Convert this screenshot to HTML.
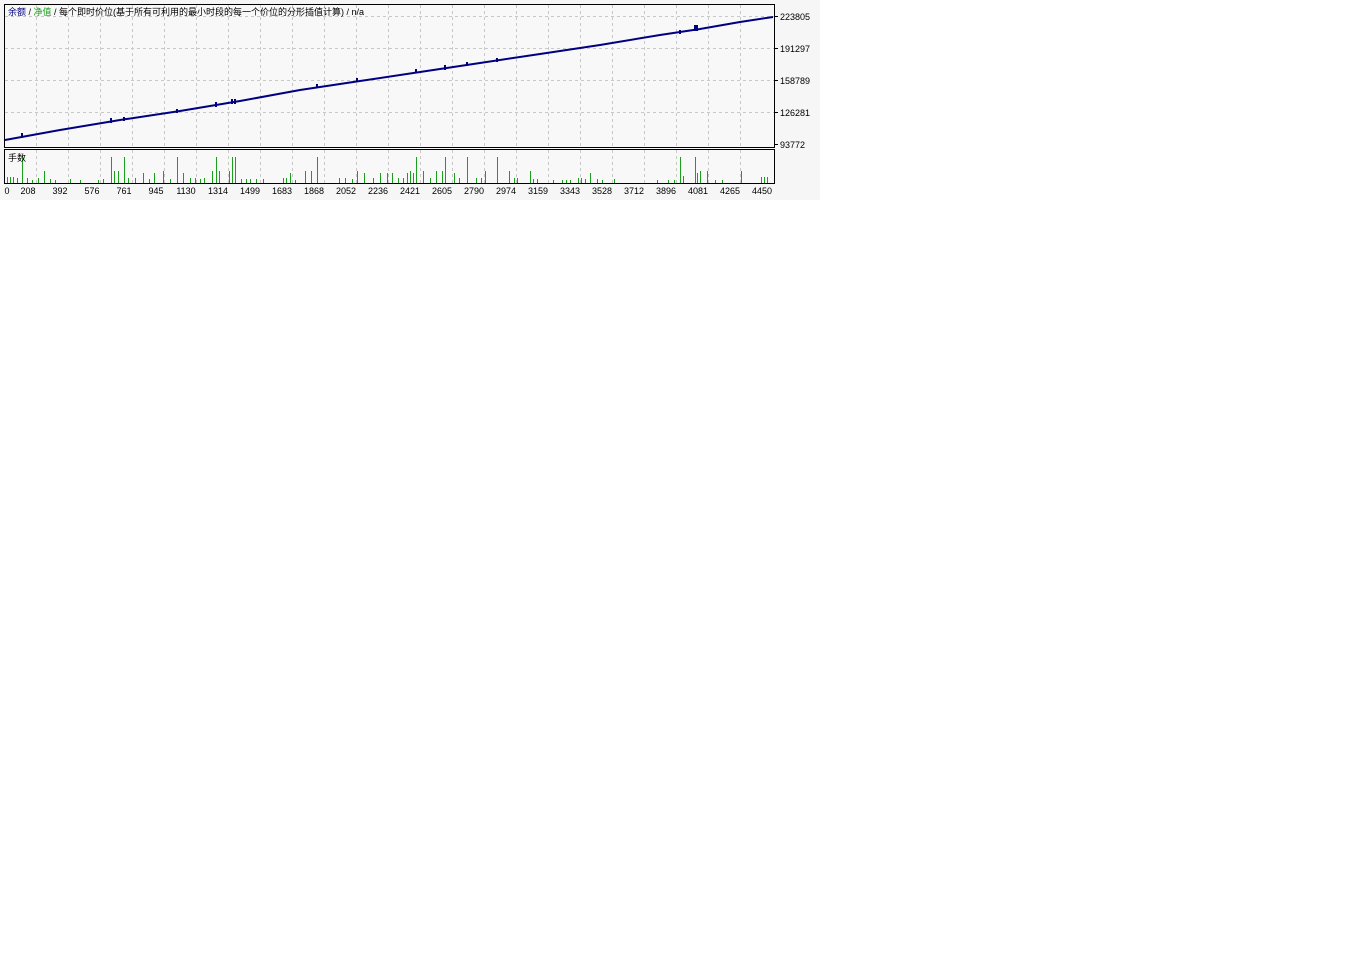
<!DOCTYPE html>
<html><head><meta charset="utf-8"><style>
html,body{margin:0;padding:0;background:#fff;width:1366px;height:972px;overflow:hidden}
svg{position:absolute;left:0;top:0}
text{font-family:"Liberation Sans","Noto Sans CJK SC",sans-serif;font-size:9px;fill:#000}
</style></head><body>
<svg width="820" height="200" xmlns="http://www.w3.org/2000/svg">
<rect x="0" y="0" width="820" height="200" fill="#f6f6f6"/>
<rect x="4" y="4" width="771" height="143" fill="#f8f8f8"/>
<rect x="4" y="149" width="771" height="34" fill="#f8f8f8"/>
<g stroke="#c8c8c8" stroke-width="1" stroke-dasharray="3,3" shape-rendering="crispEdges">
<path d="M36.5 5V147M68.5 5V147M100.5 5V147M132.5 5V147M164.5 5V147M196.5 5V147M228.5 5V147M260.5 5V147M292.5 5V147M324.5 5V147M356.5 5V147M388.5 5V147M420.5 5V147M452.5 5V147M484.5 5V147M516.5 5V147M548.5 5V147M580.5 5V147M612.5 5V147M644.5 5V147M676.5 5V147M708.5 5V147M740.5 5V147"/>
<path d="M36.5 150V183M68.5 150V183M100.5 150V183M132.5 150V183M164.5 150V183M196.5 150V183M228.5 150V183M260.5 150V183M292.5 150V183M324.5 150V183M356.5 150V183M388.5 150V183M420.5 150V183M452.5 150V183M484.5 150V183M516.5 150V183M548.5 150V183M580.5 150V183M612.5 150V183M644.5 150V183M676.5 150V183M708.5 150V183M740.5 150V183"/>
<path d="M5 16.5H775M5 48.5H775M5 80.5H775M5 112.5H775"/>
</g>
<g stroke="#000" stroke-width="1" fill="none" shape-rendering="crispEdges">
<rect x="4.5" y="4.5" width="770" height="143"/>
<rect x="4.5" y="149.5" width="770" height="34"/>
<path d="M775 16.5h3M775 48.5h3M775 80.5h3M775 112.5h3M775 144.5h3"/>
</g>
<g stroke="#000080" stroke-width="2" fill="none">
<path d="M5 140 L60 130 L120 120 L180 111 L240 101 L300 90 L360 81 L420 72 L480 63 L540 54 L600 45 L660 35 L700 29 L740 22 L773 17"/>
<path d="M22 133v5M111 118v5M124 117v4M177 109v4M216 102v5M232 99v5M235 99v5M317 84v4M357 78v4M416 69v4M445 65v5M467 62v4M497 58v4M680 30v4M695 25v6M697 25v6"/>
</g>
<g fill="#1aa01a" shape-rendering="crispEdges">
<rect x="22" y="157" width="1" height="26"/><rect x="111" y="157" width="1" height="26"/><rect x="124" y="157" width="1" height="26"/><rect x="177" y="157" width="1" height="26"/><rect x="216" y="157" width="1" height="26"/><rect x="232" y="157" width="1" height="26"/><rect x="235" y="157" width="1" height="26"/><rect x="317" y="157" width="1" height="26"/><rect x="416" y="157" width="1" height="26"/><rect x="445" y="157" width="1" height="26"/><rect x="467" y="157" width="1" height="26"/><rect x="497" y="157" width="1" height="26"/><rect x="680" y="157" width="1" height="26"/><rect x="695" y="157" width="1" height="26"/>
<rect x="44" y="171" width="1" height="12"/><rect x="114" y="171" width="1" height="12"/><rect x="118" y="171" width="1" height="12"/><rect x="143" y="173" width="1" height="10"/><rect x="154" y="173" width="1" height="10"/><rect x="163" y="171" width="1" height="12"/><rect x="183" y="173" width="1" height="10"/><rect x="212" y="171" width="1" height="12"/><rect x="219" y="171" width="1" height="12"/><rect x="229" y="171" width="1" height="12"/><rect x="290" y="173" width="1" height="10"/><rect x="305" y="171" width="1" height="12"/><rect x="311" y="171" width="1" height="12"/><rect x="357" y="171" width="1" height="12"/><rect x="364" y="173" width="1" height="10"/><rect x="380" y="173" width="1" height="10"/><rect x="387" y="173" width="1" height="10"/><rect x="392" y="173" width="1" height="10"/><rect x="407" y="173" width="1" height="10"/><rect x="410" y="171" width="1" height="12"/><rect x="413" y="173" width="1" height="10"/><rect x="423" y="171" width="1" height="12"/><rect x="436" y="171" width="1" height="12"/><rect x="442" y="171" width="1" height="12"/><rect x="454" y="173" width="1" height="10"/><rect x="485" y="171" width="1" height="12"/><rect x="509" y="171" width="1" height="12"/><rect x="530" y="171" width="1" height="12"/><rect x="590" y="173" width="1" height="10"/><rect x="683" y="176" width="1" height="7"/><rect x="697" y="173" width="1" height="10"/><rect x="700" y="171" width="1" height="12"/><rect x="707" y="171" width="1" height="12"/><rect x="741" y="171" width="1" height="12"/><rect x="761" y="177" width="1" height="6"/><rect x="764" y="177" width="1" height="6"/><rect x="767" y="177" width="1" height="6"/>
<rect x="7" y="177" width="1" height="6"/><rect x="10" y="177" width="1" height="6"/><rect x="13" y="177" width="1" height="6"/><rect x="17" y="178" width="1" height="5"/><rect x="27" y="178" width="1" height="5"/><rect x="32" y="180" width="1" height="3"/><rect x="38" y="178" width="1" height="5"/><rect x="50" y="179" width="1" height="4"/><rect x="55" y="180" width="1" height="3"/><rect x="70" y="179" width="1" height="4"/><rect x="80" y="180" width="1" height="3"/><rect x="98" y="180" width="1" height="3"/><rect x="103" y="179" width="1" height="4"/><rect x="128" y="178" width="1" height="5"/><rect x="135" y="178" width="1" height="5"/><rect x="149" y="179" width="1" height="4"/><rect x="170" y="179" width="1" height="4"/><rect x="190" y="178" width="1" height="5"/><rect x="195" y="178" width="1" height="5"/><rect x="200" y="179" width="1" height="4"/><rect x="204" y="178" width="1" height="5"/><rect x="241" y="179" width="1" height="4"/><rect x="246" y="179" width="1" height="4"/><rect x="250" y="179" width="1" height="4"/><rect x="256" y="179" width="1" height="4"/><rect x="263" y="179" width="1" height="4"/><rect x="283" y="178" width="1" height="5"/><rect x="286" y="178" width="1" height="5"/><rect x="295" y="180" width="1" height="3"/><rect x="339" y="178" width="1" height="5"/><rect x="345" y="178" width="1" height="5"/><rect x="352" y="179" width="1" height="4"/><rect x="373" y="178" width="1" height="5"/><rect x="398" y="178" width="1" height="5"/><rect x="403" y="178" width="1" height="5"/><rect x="430" y="178" width="1" height="5"/><rect x="459" y="178" width="1" height="5"/><rect x="476" y="178" width="1" height="5"/><rect x="481" y="178" width="1" height="5"/><rect x="514" y="178" width="1" height="5"/><rect x="517" y="178" width="1" height="5"/><rect x="533" y="179" width="1" height="4"/><rect x="537" y="179" width="1" height="4"/><rect x="553" y="180" width="1" height="3"/><rect x="562" y="180" width="1" height="3"/><rect x="566" y="180" width="1" height="3"/><rect x="570" y="180" width="1" height="3"/><rect x="578" y="178" width="1" height="5"/><rect x="581" y="178" width="1" height="5"/><rect x="585" y="179" width="1" height="4"/><rect x="597" y="179" width="1" height="4"/><rect x="602" y="180" width="1" height="3"/><rect x="614" y="179" width="1" height="4"/><rect x="657" y="180" width="1" height="3"/><rect x="668" y="180" width="1" height="3"/><rect x="674" y="180" width="1" height="3"/><rect x="715" y="180" width="1" height="3"/><rect x="722" y="180" width="1" height="3"/>
</g>
<text x="8" y="15"><tspan fill="#000080">余额</tspan> / <tspan fill="#1aa01a">净值</tspan> / 每个即时价位(基于所有可利用的最小时段的每一个价位的分形插值计算) / n/a</text>
<text x="8" y="161">手数</text>
<g>
<text x="780" y="20">223805</text>
<text x="780" y="52">191297</text>
<text x="780" y="84">158789</text>
<text x="780" y="116">126281</text>
<text x="780" y="148">93772</text>
</g>
<g text-anchor="middle">
<text x="7" y="194">0</text><text x="28" y="194">208</text><text x="60" y="194">392</text><text x="92" y="194">576</text><text x="124" y="194">761</text><text x="156" y="194">945</text><text x="186" y="194">1130</text><text x="218" y="194">1314</text><text x="250" y="194">1499</text><text x="282" y="194">1683</text><text x="314" y="194">1868</text><text x="346" y="194">2052</text><text x="378" y="194">2236</text><text x="410" y="194">2421</text><text x="442" y="194">2605</text><text x="474" y="194">2790</text><text x="506" y="194">2974</text><text x="538" y="194">3159</text><text x="570" y="194">3343</text><text x="602" y="194">3528</text><text x="634" y="194">3712</text><text x="666" y="194">3896</text><text x="698" y="194">4081</text><text x="730" y="194">4265</text><text x="762" y="194">4450</text>
</g>
</svg>
</body></html>
